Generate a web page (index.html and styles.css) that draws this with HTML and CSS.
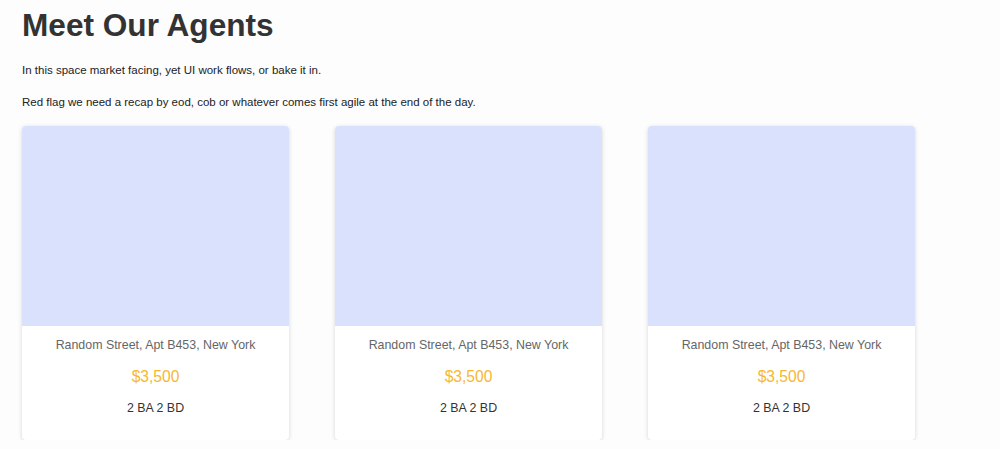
FILE: index.html
```html
<!DOCTYPE html>
<html>
<head>
<meta charset="utf-8">
<link rel="stylesheet" href="styles.css">
</head>
<body>
<main class="page">
  <h1 class="title">Meet Our Agents</h1>
  <p class="lead">In this space market facing, yet UI work flows, or bake it in.</p>
  <p class="lead">Red flag we need a recap by eod, cob or whatever comes first agile at the end of the day.</p>
  <section class="cards">
    <article class="card">
      <div class="card-img"></div>
      <div class="card-body">
        <p class="addr">Random Street, Apt B453, New York</p>
        <p class="price">$3,500</p>
        <p class="rooms">2 BA 2 BD</p>
      </div>
    </article>
    <article class="card">
      <div class="card-img"></div>
      <div class="card-body">
        <p class="addr">Random Street, Apt B453, New York</p>
        <p class="price">$3,500</p>
        <p class="rooms">2 BA 2 BD</p>
      </div>
    </article>
    <article class="card">
      <div class="card-img"></div>
      <div class="card-body">
        <p class="addr">Random Street, Apt B453, New York</p>
        <p class="price">$3,500</p>
        <p class="rooms">2 BA 2 BD</p>
      </div>
    </article>
  </section>
</main>
</body>
</html>
```
FILE: styles.css
```css
html, body {
  margin: 0;
  background: #fdfdfe;
}
body {
  font-family: "Liberation Sans", Arial, sans-serif;
  color: #333;
}
.page {
  padding: 0 22px;
}
.title {
  margin: 0;
  padding-top: 5px;
  font-size: 31.6px;
  line-height: 40px;
  font-weight: bold;
  color: #333;
}
.lead {
  margin: 19px 0 0;
  font-size: 11.5px;
  line-height: 12px;
  color: #222;
}
.lead + .lead {
  margin-top: 20px;
}
.cards {
  margin-top: 18px;
  display: flex;
  gap: 46px;
}
.card {
  width: 267px;
  background: #fff;
  border-radius: 4px;
  overflow: hidden;
  box-shadow: 0 1px 4px rgba(0,0,0,0.16);
}
.card-img {
  height: 200px;
  background: #d9e1fc;
}
.card-body {
  text-align: center;
  padding: 11px 0 23px;
}
.addr {
  margin: 0;
  font-size: 12.4px;
  line-height: 17px;
  color: #666;
}
.price {
  margin: 13px 0 0;
  font-size: 15.6px;
  line-height: 20px;
  color: #f7b731;
}
.rooms {
  margin: 13px 0 0;
  font-size: 12.4px;
  line-height: 17px;
  color: #333;
}
```
